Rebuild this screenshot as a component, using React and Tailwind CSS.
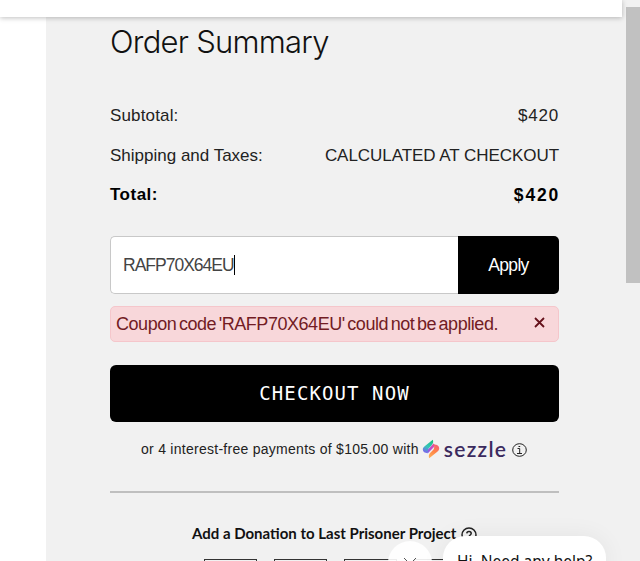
import React from "react";

const donationSlots = [1, 2, 3, 4];

function SummaryRow({ label, value, className }) {
  return (
    <div className={`flex items-center justify-between whitespace-nowrap ${className}`}>
      <span>{label}</span>
      {value}
    </div>
  );
}

function SezzleLogo() {
  return (
    <svg width="18" height="20" viewBox="0 0 18 20" className="shrink-0">
      <defs>
        <linearGradient id="sezzleTop" gradientUnits="userSpaceOnUse" x1="10" y1="1" x2="4" y2="14">
          <stop offset="0" stopColor="#18c07c" />
          <stop offset="0.55" stopColor="#35c6b8" />
          <stop offset="1" stopColor="#7a62ee" />
        </linearGradient>
        <linearGradient id="sezzleMiddle" gradientUnits="userSpaceOnUse" x1="14" y1="5" x2="5" y2="14">
          <stop offset="0" stopColor="#f45a7c" />
          <stop offset="0.5" stopColor="#c04bd0" />
          <stop offset="1" stopColor="#7460ee" />
        </linearGradient>
        <linearGradient id="sezzleBottom" gradientUnits="userSpaceOnUse" x1="15" y1="6" x2="8" y2="19">
          <stop offset="0" stopColor="#f55f78" />
          <stop offset="0.45" stopColor="#ff8246" />
          <stop offset="1" stopColor="#fdb057" />
        </linearGradient>
      </defs>
      <path d="M12.5 5.5L5.2 13.2" stroke="url(#sezzleMiddle)" strokeWidth="2.6" />
      <path d="M10.8 0.8C11.6 2.8 11.2 4.7 9.4 6.5L7.2 8.7C6 10 5.5 11.3 5.9 14.2C3 14.3 0.8 12.9 0.8 10.6C0.8 9 1.5 8.2 2.7 7.2Z" fill="url(#sezzleTop)" />
      <path d="M7.2 19.2C6.4 17.2 6.8 15.3 8.6 13.5L10.8 11.3C12 10 12.5 8.7 12.1 5.4C15 5.3 17.2 6.9 17.2 9.2C17.2 10.8 16.5 11.8 15.3 12.8Z" fill="url(#sezzleBottom)" />
    </svg>
  );
}

export default function App() {
  return (
    <div className="relative flex h-[561px] w-[640px] flex-col overflow-hidden bg-white font-['Liberation_Sans',sans-serif] text-[#222]">
      <div className="flex h-full">
        <div className="flex w-[624px] flex-col bg-[linear-gradient(to_right,#fff_46px,#f1f1f1_46px)]">
          {/* Bottom edge of the sticky header */}
          <header className="z-10 mr-0.5 h-[17px] shrink-0 bg-white shadow-[0_1px_5px_rgba(0,0,0,0.25)]" />

          <main className="ml-[46px] flex-1 pl-16 pr-[65px]">
            <h1 className="h-12 whitespace-nowrap pt-[5px] font-['Inter',sans-serif] text-[31px] font-light leading-10 tracking-[-0.75px] text-[#111]">
              Order Summary
            </h1>

            <div className="mt-[39px] text-[17px]">
              <SummaryRow
                className="h-6"
                label={<span className="tracking-[0.15px]">Subtotal:</span>}
                value={<span className="tracking-[0.8px]">$420</span>}
              />
              <SummaryRow
                className="mt-4 h-6"
                label="Shipping and Taxes:"
                value={<span className="tracking-[-0.05px]">CALCULATED AT CHECKOUT</span>}
              />
              <SummaryRow
                className="mt-[15px] h-6 font-bold tracking-[0.5px] text-black"
                label="Total:"
                value={<span className="-mr-px text-[17.5px] tracking-[1.8px]">$420</span>}
              />
            </div>

            <div className="mt-[29px] flex h-[58px]">
              <div className="flex flex-1 items-center rounded-l-[5px] border border-r-0 border-[#c8c8c8] bg-white pl-3 text-[17.5px] tracking-[-1px] text-[#444]">
                RAFP70X64EU
                <span className="h-5 w-px bg-black" />
              </div>
              <button className="w-[101px] rounded-r-[5px] bg-black text-[17.5px] tracking-[-0.7px] text-white">
                Apply
              </button>
            </div>

            <div className="mt-3 flex h-9 items-center justify-between whitespace-nowrap rounded-[5px] border border-[#f5c6cb] bg-[#f8d7da] pl-[5px] pr-[13px] text-[18px] tracking-[-0.45px] text-[#721c24]">
              <span className="[word-spacing:-2px]">Coupon code 'RAFP70X64EU' could not be applied.</span>
              <svg width="11" height="11" viewBox="0 0 11 11" fill="none" stroke="#65111b" strokeWidth="1.8" className="-mt-[3px]">
                <path d="M1 1l9 9M10 1l-9 9" />
              </svg>
            </div>

            <button className="mt-[23px] h-[57px] w-full rounded-[6px] bg-black font-['DejaVu_Sans_Mono',monospace] text-[19px] tracking-[1.1px] text-white">
              CHECKOUT NOW
            </button>

            <div className="mt-[17px] flex h-5 items-center whitespace-nowrap pl-[31px] text-[14px]">
              <span className="tracking-[0.27px]">or 4 interest-free payments of $105.00 with</span>
              <span className="ml-[3px] flex items-center">
                <SezzleLogo />
                <span className="ml-1 font-['Lato',sans-serif] text-[21px] font-semibold leading-5 tracking-[1.3px] text-[#3b2a5e]">sezzle</span>
              </span>
              <svg width="15" height="14" viewBox="0 0 15 14" fill="none" stroke="#222" className="ml-[5px] mt-px">
                <ellipse cx="7.5" cy="7" rx="6.8" ry="6.3" />
                <path d="M5.5 5.5H7.7V10.5M5 10.5H10M6.5 3.5H8.2" />
              </svg>
            </div>

            <hr className="mt-8 border-t-2 border-[#bfbfbf]" />

            <div className="mt-[30px] flex h-5 items-center whitespace-nowrap pl-[82px] font-['Lato',sans-serif] text-[15px] font-bold text-[#111]">
              <span>Add a Donation to Last Prisoner Project</span>
              <svg width="16" height="16" viewBox="0 0 16 16" fill="none" stroke="#222" strokeWidth="1.5" className="ml-[5px] mt-1">
                <circle cx="8" cy="8" r="7" />
                <path d="M5.8 6.4C5.9 3.8 10.2 3.9 10.2 6.4C10.2 8 8 8 8 10M8 11V12.5" />
              </svg>
            </div>

            <div className="mt-4 flex gap-[17px] pl-[94px]">
              {donationSlots.map((slot) => (
                <div key={slot} className="h-8 w-[53px] shrink-0 border border-[#333]" />
              ))}
            </div>
          </main>
        </div>

        {/* Page scrollbar */}
        <div className="w-4 bg-[#f1f1f1] pl-0.5 pt-[7px]">
          <div className="h-[276px] bg-[#c1c1c1]" />
        </div>
      </div>

      {/* Chat prompt */}
      <div className="absolute left-[388px] top-[541px] flex h-11 w-11 justify-center rounded-full bg-white/90 pt-4">
        <svg width="14" height="8" viewBox="0 0 14 8" fill="none" stroke="#555">
          <path d="M1 1l6 6l6-6" />
        </svg>
      </div>
      <div className="absolute left-[443px] top-[536px] h-12 w-[163px] whitespace-nowrap rounded-[22px] bg-white pl-3.5 pt-[13px] font-['Noto_Sans',sans-serif] text-[15.5px] leading-6 text-[#111] shadow-[0_0_24px_rgba(0,0,0,0.06)]">
        Hi. Need any help?
      </div>
    </div>
  );
}
